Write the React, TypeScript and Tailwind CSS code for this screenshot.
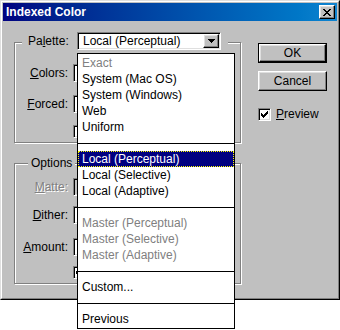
import type { ReactNode } from "react";

type Item = { label?: string; kind: "item" | "disabled" | "sep" | "selected" };

const paletteItems: Item[] = [
  { label: "Exact", kind: "disabled" },
  { label: "System (Mac OS)", kind: "item" },
  { label: "System (Windows)", kind: "item" },
  { label: "Web", kind: "item" },
  { label: "Uniform", kind: "item" },
  { kind: "sep" },
  { label: "Local (Perceptual)", kind: "selected" },
  { label: "Local (Selective)", kind: "item" },
  { label: "Local (Adaptive)", kind: "item" },
  { kind: "sep" },
  { label: "Master (Perceptual)", kind: "disabled" },
  { label: "Master (Selective)", kind: "disabled" },
  { label: "Master (Adaptive)", kind: "disabled" },
  { kind: "sep" },
  { label: "Custom...", kind: "item" },
  { kind: "sep" },
  { label: "Previous", kind: "item" },
];

const sunken =
  "border border-t-[#808080] border-l-[#808080] border-r-white border-b-white shadow-[inset_1px_1px_0_#000,inset_-1px_-1px_0_#dfdfdf] p-px";
const raised =
  "border border-t-white border-l-white border-r-black border-b-black shadow-[inset_-1px_-1px_0_#808080,inset_1px_1px_0_#dfdfdf]";
const groupBox =
  "border border-[#808080] shadow-[1px_1px_0_#fff,inset_1px_1px_0_#fff] m-0 min-w-0";

function ArrowButton() {
  return (
    <div className={`ml-auto w-[16px] h-[14px] bg-[#c0c0c0] flex items-center justify-center ${raised}`}>
      <svg width="7" height="4" viewBox="0 0 7 4" shapeRendering="crispEdges">
        <path d="M0 0h7v1H6v1H5v1H4v1H3V3H2V2H1V1H0z" fill="#000" />
      </svg>
    </div>
  );
}

function Combo({ text, className, bg = "bg-white", children }: { text?: string; className: string; bg?: string; children?: ReactNode }) {
  return (
    <div className={`relative h-[18px] flex items-center ${sunken} ${bg} ${className}`}>
      {text && <span className="pl-[4px] whitespace-nowrap">{text}</span>}
      <ArrowButton />
      {children}
    </div>
  );
}

function Checkbox({ checked }: { checked?: boolean }) {
  return (
    <div className={`w-[13px] h-[13px] bg-white shrink-0 flex items-center justify-center ${sunken}`}>
      {checked && (
        <svg width="7" height="7" viewBox="0 0 7 7" shapeRendering="crispEdges">
          <path d="M6 0h1v3H6v1H5v1H4v1H3v1H2V6H1V5H0V2h1v1h1v1h1V3h1V2h1V1h1z" fill="#000" />
        </svg>
      )}
    </div>
  );
}

function PaletteList() {
  return (
    <div className="absolute left-[-1px] top-[20px] z-10 w-[158px] bg-white border border-black py-px">
      {paletteItems.map((it, i) =>
        it.kind === "sep" ? (
          <div key={i} className="h-[16px] flex items-center">
            <div className="w-full h-px bg-black" />
          </div>
        ) : it.kind === "selected" ? (
          <div key={i} className="h-[16px] leading-[14px] pl-[3px] bg-[#000080] text-white border border-dotted border-[#ffff00] whitespace-nowrap">
            {it.label}
          </div>
        ) : (
          <div
            key={i}
            className={`h-[16px] leading-[16px] pl-[4px] whitespace-nowrap ${it.kind === "disabled" ? "text-[#808080]" : "text-black"}`}
          >
            {it.label}
          </div>
        )
      )}
    </div>
  );
}

function Row({ label, className, disabled, children }: { label: ReactNode; className: string; disabled?: boolean; children: ReactNode }) {
  return (
    <div className={`flex items-center ${className}`}>
      <div
        className={`w-[46px] text-right whitespace-nowrap ${disabled ? "text-[#808080] [text-shadow:1px_1px_0_#fff]" : ""}`}
      >
        {label}
      </div>
      <div className="ml-[5px] flex items-center">{children}</div>
    </div>
  );
}

export default function App() {
  return (
    <div className="w-[340px] h-[330px] bg-white font-['Liberation_Sans',Arial,sans-serif] text-[12px] leading-[16px] text-black select-none">
      <div className="w-[340px] h-[300px] bg-[#c0c0c0] border border-t-[#dfdfdf] border-l-[#dfdfdf] border-r-black border-b-black">
        <div className="h-full border border-t-white border-l-white border-r-[#808080] border-b-[#808080] p-px flex flex-col">
          <div className="h-[18px] shrink-0 bg-linear-to-r from-[#000080] to-[#1084d0] flex items-center pl-[3px] pr-[2px]">
            <span className="text-white font-bold">Indexed Color</span>
            <div className={`ml-auto w-[16px] h-[14px] bg-[#c0c0c0] flex items-center justify-center ${raised}`}>
              <svg width="8" height="7" viewBox="0 0 8 7" shapeRendering="crispEdges">
                <path
                  d="M0 0h2v1h1v1h2V1h1V0h2v1H7v1H6v1H5v1h1v1h1v1h1v1H6V6H5V5H3v1H2v1H0V6h1V5h1V4h1V3H2V2H1V1H0z"
                  fill="#000"
                />
              </svg>
            </div>
          </div>

          <div className="flex flex-1 pl-[11px]">
            <div className="w-[227px] flex flex-col">
              <fieldset className={`mt-[11px] pl-[7px] pb-[3px] ${groupBox}`}>
                <legend className="bg-[#c0c0c0] pl-[6px] pr-[7px] pb-[2px]">
                  <div className="flex items-center">
                    <span className="w-[41px] whitespace-nowrap">
                      Pa<u>l</u>ette:
                    </span>
                    <Combo text="Local (Perceptual)" className="ml-[8px] w-[144px]">
                      <PaletteList />
                    </Combo>
                  </div>
                </legend>
                <Row label={<><u>C</u>olors:</>} className="mt-[12px]">
                  <div className={`w-[44px] h-[18px] bg-white ${sunken}`} />
                </Row>
                <Row label={<><u>F</u>orced:</>} className="mt-[13px]">
                  <Combo className="w-[140px]" />
                </Row>
                <Row label="" className="mt-[10px] h-[16px]">
                  <Checkbox />
                </Row>
              </fieldset>

              <fieldset className={`mt-[12px] pl-[7px] pb-[3px] ${groupBox}`}>
                <legend className="ml-[6px] bg-[#c0c0c0] px-[3px]">Options</legend>
                <Row label={<><u>M</u>atte:</>} disabled className="mt-[7px]">
                  <Combo bg="bg-[#c0c0c0]" className="w-[100px]" />
                </Row>
                <Row label={<><u>D</u>ither:</>} className="mt-[10px]">
                  <Combo className="w-[100px]" />
                </Row>
                <Row label={<><u>A</u>mount:</>} className="mt-[14px]">
                  <div className={`w-[44px] h-[18px] bg-white ${sunken}`} />
                </Row>
                <Row label="" className="mt-[8px] h-[16px]">
                  <Checkbox checked />
                </Row>
              </fieldset>
            </div>

            <div className="ml-[17px] w-[69px] flex flex-col pt-[22px]">
              <button className="h-[20px] border border-black bg-[#c0c0c0] p-0">
                <div className={`h-full flex items-center justify-center ${raised}`}>OK</div>
              </button>
              <button className={`mt-[8px] h-[20px] bg-[#c0c0c0] flex items-center justify-center ${raised}`}>
                Cancel
              </button>
              <label className="mt-[15px] flex items-center">
                <Checkbox checked />
                <span className="ml-[5px]">
                  <u>P</u>review
                </span>
              </label>
            </div>
          </div>
        </div>
      </div>
    </div>
  );
}
